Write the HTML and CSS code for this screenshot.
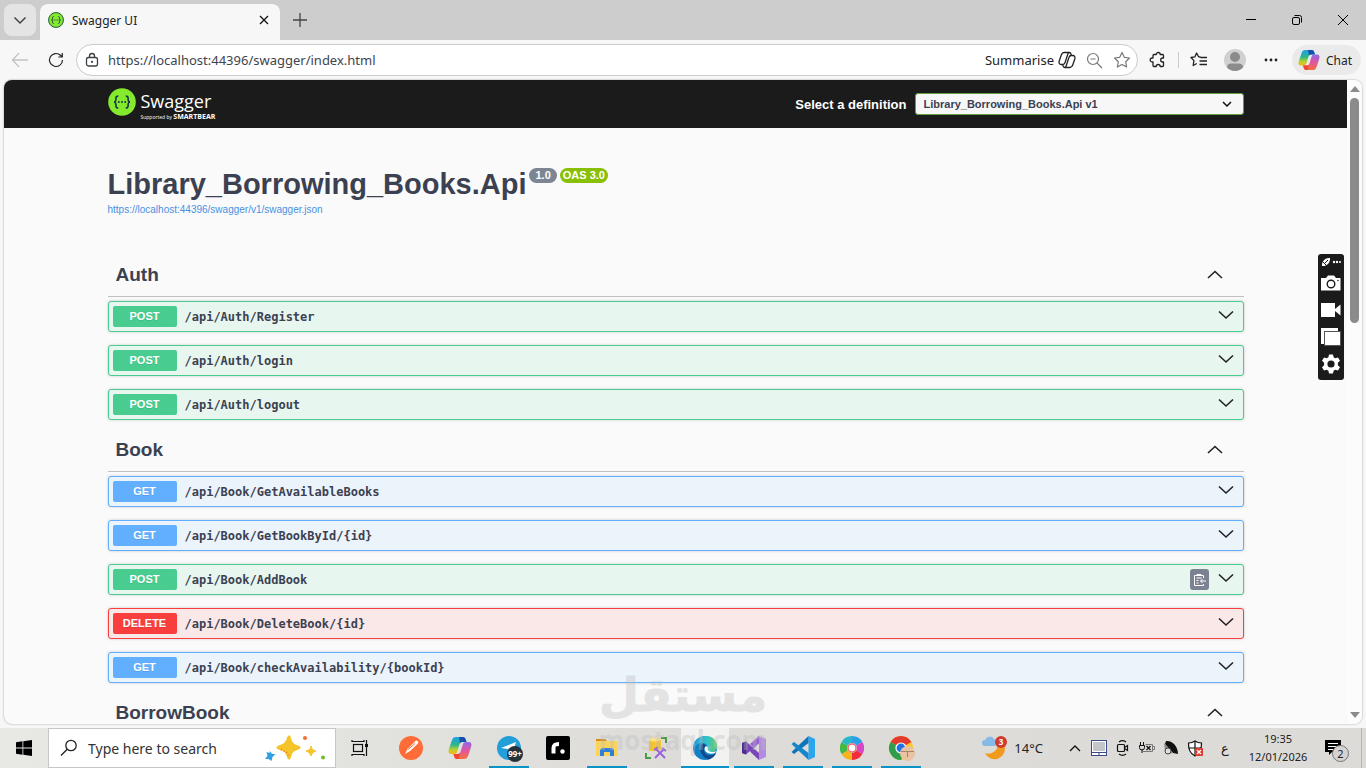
FILE: index.html
```html
<!DOCTYPE html>
<html lang="en">
<head>
  <meta charset="UTF-8">
  <meta name="viewport" content="width=device-width, initial-scale=1.0">
  <title>Swagger UI</title>
  <link rel="stylesheet" href="styles.css">
</head>
<body>
  <!-- Shared icons -->
  <svg class="defs" width="0" height="0" aria-hidden="true">
    <defs>
      <linearGradient id="cp-left" x1="0" y1="0" x2="0" y2="1">
        <stop offset="0" stop-color="#1fa0e8"/>
        <stop offset=".45" stop-color="#2bb58c"/>
        <stop offset=".75" stop-color="#b9d12e"/>
        <stop offset="1" stop-color="#f7b51a"/>
      </linearGradient>
      <linearGradient id="cp-right" x1="0" y1="0" x2="0" y2="1">
        <stop offset="0" stop-color="#8d6be8"/>
        <stop offset=".5" stop-color="#e0569f"/>
        <stop offset="1" stop-color="#f7713c"/>
      </linearGradient>
      <linearGradient id="edge-green" x1="0" y1="0" x2="1" y2="0">
        <stop offset="0" stop-color="#1d9fdb"/>
        <stop offset=".6" stop-color="#34c3c8"/>
        <stop offset="1" stop-color="#62cf5c"/>
      </linearGradient>
      <symbol id="chev-down" viewBox="0 0 16 16"><path d="M1 4.5l7 6.5 7-6.5" fill="none" stroke="#222" stroke-width="1.6"/></symbol>
      <symbol id="chev-up" viewBox="0 0 16 16"><path d="M1 11l7-6.5 7 6.5" fill="none" stroke="#222" stroke-width="1.6"/></symbol>
      <symbol id="swagger" viewBox="0 0 28 28">
        <circle cx="14" cy="14" r="13.8" fill="#85ea2d"/>
        <path d="M10.3 8c-2 0-2.4.8-2.4 2.300v1.500c0 1.300-.5 2-1.800 2.200 1.300.2 1.800.9 1.800 2.200v1.500c0 1.500.4 2.300 2.400 2.300M17.700 8c2 0 2.400.8 2.400 2.300v1.500c0 1.300.5 2 1.800 2.200-1.300.2-1.800.9-1.800 2.200v1.500c0 1.500-.4 2.300-2.400 2.300" fill="none" stroke="#173647" stroke-width="1.600"/>
        <circle cx="10.800" cy="14" r="1" fill="#173647"/><circle cx="14" cy="14" r="1" fill="#173647"/><circle cx="17.200" cy="14" r="1" fill="#173647"/>
      </symbol>
      <symbol id="copilot" viewBox="0 0 24 24">
        <path d="M8 1h7c1.500 0 2.200 1 2.600 2.300L18.500 6h-4c-1.800 0-2.600.8-3.100 2.500l-2.200 7C8.700 17.200 8 18 6 18H3.500C.8 18 0 16 .8 13.500l3-9C4.600 2 5.800 1 8 1z" fill="url(#cp-left)"/>
        <path d="M11 1h4c1.500 0 2.200 1 2.600 2.300L18.500 6h-4c-1.200 0-2 .4-2.500 1.300z" fill="#174fae"/>
        <path d="M16 23H9c-1.500 0-2.200-1-2.600-2.300L5.500 18h4c1.800 0 2.600-.8 3.100-2.500l2.200-7C15.300 6.800 16 6 18 6h2.500c2.700 0 3.500 2 2.700 4.500l-3 9c-.8 2.500-2 3.500-4.200 3.500z" fill="url(#cp-right)"/>
        <path d="M5.500 18h4c1.200 0 2-.4 2.500-1.300L10.500 23H9c-1.500 0-2.200-1-2.600-2.300z" fill="#f2452f"/>
      </symbol>
    </defs>
  </svg>

  <header class="titlebar">
    <button class="tab-menu" aria-label="Tab actions">
      <svg width="16" height="16" viewBox="0 0 16 16"><path d="M2.500 5.500L8 11l5.500-5.500" fill="none" stroke="#444" stroke-width="1.500"/></svg>
    </button>
    <div class="tab">
      <svg width="16" height="16"><use href="#swagger"/><circle cx="8" cy="8" r="7.400" fill="none" stroke="#2c5a55"/></svg>
      <span class="tab-title">Swagger UI</span>
      <button class="icon-btn tab-close" aria-label="Close tab">
        <svg width="10" height="10" viewBox="0 0 10 10"><path d="M1 1l8 8M9 1L1 9" stroke="#111" stroke-width="1.300"/></svg>
      </button>
    </div>
    <button class="icon-btn new-tab" aria-label="New tab">
      <svg width="16" height="16" viewBox="0 0 16 16"><path d="M8 1v14M1 8h14" stroke="#444" stroke-width="1.300"/></svg>
    </button>
    <div class="window-controls">
      <button class="icon-btn" aria-label="Minimise"><svg width="10" height="10"><path d="M0 4.500h10" stroke="#000"/></svg></button>
      <button class="icon-btn" aria-label="Restore"><svg width="12" height="12" fill="none" stroke="#000"><rect x="1.500" y="3.500" width="7" height="7" rx="1.500"/><path d="M3.500 1.500h5a2 2 0 012 2v5"/></svg></button>
      <button class="icon-btn" aria-label="Close"><svg width="12" height="12"><path d="M1 1l10 10M11 1L1 11" stroke="#000"/></svg></button>
    </div>
  </header>

  <nav class="toolbar">
    <button class="icon-btn tool" aria-label="Back">
      <svg width="18" height="16" viewBox="0 0 18 16" fill="none" stroke="#c3c3c3" stroke-width="1.300"><path d="M8 1L1.500 8 8 15M1.500 8H17"/></svg>
    </button>
    <button class="icon-btn tool" aria-label="Refresh">
      <svg width="16" height="16" viewBox="0 0 16 16" fill="none" stroke="#222" stroke-width="1.200"><path d="M14.500 8a6.500 6.500 0 11-2-4.700L14.300 5M14.300 1v4h-4"/></svg>
    </button>
    <div class="address">
      <svg width="14" height="16" viewBox="0 0 14 16" fill="none" stroke="#3b3f46" stroke-width="1.300"><rect x="1.500" y="5.500" width="11" height="8.500" rx="2"/><path d="M4.500 5.500V4a2.500 2.500 0 015 0v1.500"/><circle cx="7" cy="9.800" r=".5" fill="#3b3f46"/></svg>
      <input type="text" class="url" aria-label="Address" value="https://localhost:44396/swagger/index.html">
      <button class="summarise">Summarise
        <svg width="18" height="18" viewBox="0 0 18 18" fill="none" stroke="#222" stroke-width="1.300" stroke-linejoin="round"><path d="M6 1.500h5.500c1.200 0 1.500 1 1.800 2.500M6 1.500C4.500 1.500 3.800 2.500 3.300 4L1.200 10c-.6 2 .2 3.500 2 3.500h1.500c1.400 0 2-.8 2.400-2L9.500 4c.4-1.500 1-2.500 2-2.500M12 16.500H6.500c-1.200 0-1.500-1-1.800-3M12 16.500c1.500 0 2.200-1 2.700-2.500l2.100-6c.6-2-.2-3.500-2-3.500h-1.500c-1.400 0-2 .8-2.400 2L8.500 14c-.4 1.500-1 2.500-2 2.500"/></svg>
      </button>
      <button class="icon-btn addr-btn" aria-label="Zoom out">
        <svg width="17" height="17" viewBox="0 0 17 17" fill="none" stroke="#777" stroke-width="1.200"><circle cx="7" cy="7" r="5.500"/><path d="M11 11l5 5M4.500 7h5"/></svg>
      </button>
      <button class="icon-btn addr-btn" aria-label="Add to favourites">
        <svg width="18" height="18" viewBox="0 0 18 18" fill="none" stroke="#777" stroke-width="1.200" stroke-linejoin="round"><path d="M9 1.500l2.300 4.800 5.200.7-3.800 3.700.9 5.300L9 13.500 4.400 16l.9-5.300L1.500 7l5.200-.7z"/></svg>
      </button>
    </div>
    <button class="icon-btn tool" aria-label="Extensions">
      <svg width="18" height="18" viewBox="0 0 18 18" fill="none" stroke="#222" stroke-width="1.300" stroke-linejoin="round"><path d="M5 3.500h2.200a2 2 0 014 0h2.300a1 1 0 011 1V7h-.8a2 2 0 000 4h.8v3.500a1 1 0 01-1 1h-2.300a2 2 0 00-4 0H5a1 1 0 01-1-1V11H3.200a2 2 0 010-4H4V4.500a1 1 0 011-1z"/></svg>
    </button>
    <span class="divider"></span>
    <button class="icon-btn tool" aria-label="Favourites">
      <svg width="18" height="18" viewBox="0 0 18 18" fill="none" stroke="#222" stroke-width="1.300" stroke-linejoin="round"><path d="M10.500 6L8.600 5.800 6.600 2 4.800 5.900 1 6.500l2.900 3.100-.7 4.900 3.600-2M10.500 6.500H17M9.500 10H17M9.500 13.500H17"/></svg>
    </button>
    <button class="icon-btn tool" aria-label="Profile">
      <svg width="22" height="22" viewBox="0 0 22 22"><circle cx="11" cy="11" r="11" fill="#d0d0d0"/><circle cx="11" cy="8" r="5" fill="#8b8b8b"/><path d="M3 18.500c0-3 2-4 4-4h8c2 0 4 1 4 4a11 11 0 01-16 0z" fill="#8b8b8b"/></svg>
    </button>
    <button class="icon-btn tool" aria-label="Settings and more">
      <svg width="14" height="4" fill="#222"><circle cx="2" cy="2" r="1.400"/><circle cx="7" cy="2" r="1.400"/><circle cx="12" cy="2" r="1.400"/></svg>
    </button>
    <button class="chat"><svg width="22" height="22"><use href="#copilot"/></svg>Chat</button>
  </nav>

  <div class="viewport">
    <div class="page">
      <div class="topbar">
        <div class="wrapper topbar-inner">
          <a class="logo" href="#" aria-label="Swagger">
            <svg width="28" height="28"><use href="#swagger"/></svg>
            <span class="logo-text">
              <span class="logo-name">Swagger</span>
              <span class="logo-sub">Supported by <b>SMARTBEAR</b></span>
            </span>
          </a>
          <label class="definition" for="definition">Select a definition</label>
          <select id="definition">
            <option>Library_Borrowing_Books.Api v1</option>
          </select>
        </div>
      </div>

      <main class="wrapper">
        <section class="info">
          <h1>Library_Borrowing_Books.Api <span class="badge">1.0</span><span class="badge oas">OAS 3.0</span></h1>
          <a href="#">https://localhost:44396/swagger/v1/swagger.json</a>
        </section>

        <section>
          <h2 class="tag"><span>Auth</span><svg width="16" height="16"><use href="#chev-up"/></svg></h2>
          <div class="ops">
            <button class="op post"><span class="method">POST</span><span class="path">/api/Auth/Register</span><svg class="arrow" width="16" height="16"><use href="#chev-down"/></svg></button>
            <button class="op post"><span class="method">POST</span><span class="path">/api/Auth/login</span><svg class="arrow" width="16" height="16"><use href="#chev-down"/></svg></button>
            <button class="op post"><span class="method">POST</span><span class="path">/api/Auth/logout</span><svg class="arrow" width="16" height="16"><use href="#chev-down"/></svg></button>
          </div>
        </section>

        <section>
          <h2 class="tag"><span>Book</span><svg width="16" height="16"><use href="#chev-up"/></svg></h2>
          <div class="ops">
            <button class="op get"><span class="method">GET</span><span class="path">/api/Book/GetAvailableBooks</span><svg class="arrow" width="16" height="16"><use href="#chev-down"/></svg></button>
            <button class="op get"><span class="method">GET</span><span class="path">/api/Book/GetBookById/{id}</span><svg class="arrow" width="16" height="16"><use href="#chev-down"/></svg></button>
            <button class="op post"><span class="method">POST</span><span class="path">/api/Book/AddBook</span>
              <span class="copy"><svg width="13" height="14" viewBox="0 0 13 14" fill="none" stroke="#fff"><path d="M10.500 5V2.500h-9v10h9V11M4 2.500v-1h4v1M3.500 5h5M3.500 7.500h2M3.500 10h2M13 8H7.500M9.500 6l-2 2 2 2"/></svg></span>
              <svg class="arrow" width="16" height="16"><use href="#chev-down"/></svg></button>
            <button class="op delete"><span class="method">DELETE</span><span class="path">/api/Book/DeleteBook/{id}</span><svg class="arrow" width="16" height="16"><use href="#chev-down"/></svg></button>
            <button class="op get"><span class="method">GET</span><span class="path">/api/Book/checkAvailability/{bookId}</span><svg class="arrow" width="16" height="16"><use href="#chev-down"/></svg></button>
          </div>
        </section>

        <section>
          <h2 class="tag"><span>BorrowBook</span><svg width="16" height="16"><use href="#chev-up"/></svg></h2>
        </section>
      </main>
    </div>

    <div class="scrollbar">
      <svg width="10" height="6"><path d="M0 6l5-6 5 6z" fill="#8b8b8b"/></svg>
      <div class="track"><div class="thumb"></div></div>
      <svg width="10" height="6"><path d="M0 0l5 6 5-6z" fill="#8b8b8b"/></svg>
    </div>

    <!-- Screen capture widget -->
    <aside class="capture">
      <svg width="20" height="8" viewBox="0 1 20 8" fill="#fff"><path d="M1 9c0-2 0-3 1-4.500C3.500 2 6 .8 9 1 9.200 4 8 6.500 5.500 8 4 9 3 9 1 9z"/><path d="M3 7l4-4M2 5l3 3" stroke="#1b1b1b"/><circle cx="13" cy="5" r="1.200"/><circle cx="16" cy="5" r="1.200"/><circle cx="19" cy="5" r="1"/></svg>
      <svg width="20" height="20" viewBox="0 -2 20 20"><path d="M0 3h5l2-2.500h6L15 3h4.500v12.500H0z" fill="#fff"/><circle cx="10" cy="9" r="3.800" fill="none" stroke="#1b1b1b" stroke-width="1.400"/><circle cx="17" cy="5.500" r=".7"/></svg>
      <svg width="20" height="20" viewBox="0 -3 20 20" fill="#fff"><path d="M0 0h14v14H0zM14 6l5.500-4.500v11L14 8z"/></svg>
      <svg width="20" height="20" viewBox="0 -1 20 20"><path d="M0 0h17v3H3v13H0z" fill="#fff"/><path d="M3.500 3.500h16v14h-16z" fill="#fff" stroke="#555"/></svg>
      <svg width="20" height="20" viewBox="0 0 20 20"><path d="M8 .5h4l.6 2.800 1.700 1 2.700-.9 2 3.400-2.100 1.900v2.600l2.100 1.900-2 3.400-2.700-.9-1.700 1-.6 2.800H8l-.6-2.800-1.700-1-2.700.9-2-3.400 2.100-1.900V8.700L1 6.800l2-3.400 2.700.9 1.700-1z" fill="#fff"/><circle cx="10" cy="10" r="3.600" fill="#1b1b1b"/></svg>
    </aside>
  </div>

  <footer class="taskbar">
    <button class="start" aria-label="Start">
      <svg width="16" height="16" viewBox="0 0 16 16"><path d="M0 2.200l6.500-.9v6.200H0zM7.300 1.200L16 0v7.500H7.300zM0 8.400h6.500v6.300L0 13.800zM7.300 8.400H16V16l-8.700-1.200z"/></svg>
    </button>
    <div class="search">
      <svg width="18" height="18" viewBox="0 0 18 18" fill="none" stroke="#222" stroke-width="1.300"><circle cx="11" cy="6.500" r="5.200"/><path d="M7.200 10.300L1 16.500"/></svg>
      <input type="text" placeholder="Type here to search" aria-label="Type here to search">
      <svg width="62" height="26" viewBox="0 0 62 26">
        <path d="M25 2c2 7 3 8 10 10.500-7 2.500-8 3.500-10 10.500-2-7-4-8-11-10.500C21 10 23 9 25 2z" fill="#f5c428" stroke="#f5c428" stroke-width="3" stroke-linejoin="round"/>
        <path d="M47 11c1 4 2 4 5 5-3 1-4 2-5 5-1-3-2-4-5-5 3-1 4-1 5-5z" fill="#f5c428" stroke="#f5c428"/>
        <path d="M6 16l2 3 3.500 0-3 3-1 4-3-2-3.500 0 2.500-3-1-4 3 1z" fill="#2f9fe5"/>
        <path d="M17 14.500l6 3 2 5" fill="none" stroke="#e9783c" stroke-width="1.500" stroke-dasharray="1 2"/>
        <circle cx="41" cy="3" r="2" fill="#f0703c"/><circle cx="59" cy="22.500" r="2" fill="#6bbf23"/>
      </svg>
    </div>
    <div class="apps">
      <button class="app view" aria-label="Task view"><svg width="18" height="16" viewBox="0 0 18 16" fill="none" stroke="#111" stroke-width="1.200"><rect x="2.500" y="4.500" width="9" height="7"/><path d="M1 0v1.500h12V0M1 16v-1.500h12V16M15.500 0v16"/><path d="M14 5.500h3" stroke-width="3"/></svg></button>
      <button class="app" aria-label="Postman"><svg width="24" height="24"><circle cx="12" cy="12" r="12" fill="#ff6c37"/><path d="M6 18l2.500-5L16 5.500a1.500 1.500 0 013 2L11 15z" fill="#fff"/><path d="M9 13.500l7-6" stroke="#ff6c37"/></svg></button>
      <button class="app" aria-label="Copilot"><svg width="24" height="24"><use href="#copilot"/></svg></button>
      <button class="app open" aria-label="Telegram"><svg width="24" height="24"><circle cx="12" cy="12" r="12" fill="#229ed9"/><path d="M4 12L19 6l-3 10-5-3z" fill="#fff"/></svg><span class="count">99+</span></button>
      <button class="app" aria-label="Roblox"><svg width="24" height="24"><rect width="24" height="24" rx="2"/><path d="M7.500 17.500V12c0-3 1.500-4 5.500-4" fill="none" stroke="#fff" stroke-width="4"/><circle cx="16.500" cy="15.500" r="2.200" fill="#fff"/></svg></button>
      <button class="app open" aria-label="File Explorer"><svg width="22" height="20" viewBox="0 0 22 20"><path d="M0 1h9l2 2h11v15H0z" fill="#fbd55b"/><path d="M0 1h9l2 2H0z" fill="#d98b12"/><path d="M4 18v-6l2-2h10l2 2v6h-4v-4H8v4z" fill="#2f7fd6"/></svg></button>
      <button class="app" aria-label="SQL tools"><svg width="24" height="24" viewBox="0 0 24 24"><path d="M5 3h12v10l-4 2H5z" fill="#f7c52a"/><ellipse cx="11" cy="3.500" rx="6" ry="2" fill="#fbe08a"/><path d="M17 2h5v5M2 17v5h5" fill="none" stroke="#4a9b46" stroke-width="2"/><path d="M12 13l9 9M20 13l-9 9M10 14l4-3M18 12l4 3" stroke="#9a63d8" stroke-width="2"/></svg></button>
      <button class="app open active" aria-label="Edge"><svg width="24" height="24"><circle cx="12" cy="12" r="12" fill="#1280c8"/><path d="M1 8C4 1 10 0 13 0c7 0 11 5 11 10 0 4-3 6-6 6-4 0-3-2-3-4 0-3-3-5-6-5-4 0-7 3-8 6z" fill="url(#edge-green)"/><path d="M9 8c-3 4-2 12 6 15.500 4-.8 6.500-3 8-6-7 4-12 1-12-4 0-2 1-3 2-3.500C12 8 10.500 7.500 9 8z" fill="#114a8b"/><path d="M12 11c-2 5 4 8 10 6l1-2c-3 2-9 1-8-3 0-1-1-3-3-1z" fill="#fff"/></svg></button>
      <button class="app open" aria-label="Visual Studio"><svg width="24" height="24"><path d="M17 0l7 3v18l-7 3z" fill="#b48be4"/><path d="M17 0v7L4 18.500 0 17V7l4-1.500L17 17v7L8 15.500z" fill="#7a45b8"/><path d="M0 7l4-1.500v13L0 17z" fill="#4b2f86"/><path d="M17 0L8 8l4 4 5-5z" fill="#9560d3"/></svg></button>
      <button class="app open" aria-label="VS Code"><svg width="24" height="24"><path d="M17.500 0L24 3v18l-6.500 3z" fill="#2ba5ec"/><path d="M17.500 0v7L3 18 .5 16 17.500 0z" fill="#0d74ba"/><path d="M17.500 24v-7L3 6 .5 8z" fill="#1486cc"/></svg></button>
      <button class="app open" aria-label="Screen recorder"><svg width="24" height="24" fill="none" stroke-width="7"><path d="M12 3.500a8.500 8.500 0 017.400 4.200" stroke="#2b9fe8"/><path d="M19.400 7.700a8.500 8.500 0 010 8.600" stroke="#d546c8"/><path d="M19.400 16.300A8.500 8.500 0 0112 20.500" stroke="#ee2f3a"/><path d="M12 20.500a8.500 8.500 0 01-7.400-4.200" stroke="#f7b21c"/><path d="M4.600 16.300a8.500 8.500 0 010-8.600" stroke="#43b943"/><path d="M4.600 7.700A8.500 8.500 0 0112 3.500" stroke="#27b8c9"/><circle cx="12" cy="12" r="4" fill="#fff" stroke="#f2696c" stroke-width="1.500"/></svg></button>
      <button class="app open" aria-label="Chrome"><svg width="28" height="26" viewBox="-2 -1 28 26"><circle cx="12" cy="12" r="12" fill="#fcc934"/><path d="M12 12L1.600 6a12 12 0 0120.800 0z" fill="#e33b2e"/><path d="M12 12L1.600 6A12 12 0 0012 24l5-9z" fill="#2e9e4d"/><circle cx="12" cy="12" r="5.600" fill="#fff"/><circle cx="12" cy="12" r="4.400" fill="#1a73e8"/><circle cx="18.500" cy="17.500" r="7.500" fill="#e9c3a2"/><path d="M12 15.500h13M18.500 16v5" stroke="#a58468"/></svg></button>
    </div>

    <div class="tray">
      <button class="weather">
        <svg width="26" height="24" viewBox="0 0 26 24"><path d="M22 9a10 10 0 01-19 8c5 2 12-1 13-8z" fill="#f29a1d"/><path d="M3 10a3 3 0 010-6 5 5 0 019-1 4 4 0 011 7z" fill="#84b9e8"/><circle cx="19" cy="6" r="6" fill="#d13a2e"/><text x="19" y="9" class="weather-count">3</text></svg>
        14°C
      </button>
      <button class="tray-btn" aria-label="Show hidden icons"><svg width="12" height="8"><path d="M1 7l5-5 5 5" fill="none" stroke="#111" stroke-width="1.300"/></svg></button>
      <button class="tray-btn" aria-label="Touchpad"><svg width="16" height="16"><rect x=".5" y=".5" width="15" height="15" fill="#fff" stroke="#3d4a86"/><rect x="2" y="2" width="12" height="9" fill="#c3c5c8"/><path d="M1 12.500h14M8 12.500v3" stroke="#3d4a86"/></svg></button>
      <button class="tray-btn" aria-label="Meet now"><svg width="14" height="16" fill="none" stroke="#111" stroke-width="1.200"><rect x="1.500" y="4.500" width="7" height="7" rx="1"/><path d="M8.500 7.500l3-2v5l-3-2M3 2c2-1.500 5-1.500 7 0M3 14c2 1.500 5 1.500 7 0"/></svg></button>
      <button class="tray-btn" aria-label="Battery"><svg width="16" height="14" fill="none" stroke="#111"><path d="M1.500 1v3M4.500 1v3M.5 4.500h5v2a2 2 0 01-5 0zM3 8.500V12"/><path d="M6.500 3.500h7v7H4M13.500 5.500h2v3h-2" stroke="#777"/><path d="M7.500 5l4 4M11.500 5l-4 4" stroke-width="1.300"/></svg></button>
      <button class="tray-btn" aria-label="Volume"><svg width="16" height="16"><path d="M3 1c6-1 12 5 12 13l-5-1L2 4z" fill="#111"/><path d="M1 3l9 10-5 1-3-3z" fill="#8a8a8a"/><circle cx="5" cy="11" r="3" fill="#ddd" stroke="#444"/></svg></button>
      <button class="tray-btn" aria-label="Security"><svg width="17" height="17"><path d="M8 1c2 1.500 4 2 6.500 2 0 6-1 10-6.500 13C2.500 13 1.500 9 1.500 3 4 3 6 2.500 8 1z" fill="#fff" stroke="#111" stroke-width="1.200"/><path d="M8 1v15M1.500 8h13" stroke="#111" stroke-width="1.200"/><rect x="8" y="8" width="8" height="8" rx="1" fill="#e0392b"/><path d="M10 10l4 4M14 10l-4 4" stroke="#fff" stroke-width="1.300"/></svg></button>
      <button class="lang" lang="ar">ع</button>
      <time class="clock"><span>19:35</span><span>12/01/2026</span></time>
      <button class="notify" aria-label="Notifications">
        <svg width="16" height="16"><path d="M0 0h16v12H7l-3 3v-3H0z"/><path d="M3 3.500h10M3 6.500h10M3 9.500h5" stroke="#fff"/></svg>
        <span class="notify-count">2</span>
      </button>
    </div>
  </footer>

  <div class="watermark" aria-hidden="true">
    <span class="mark-ar" lang="ar">مستقل</span>
    <span class="mark-en">mostaql.com</span>
  </div>
</body>
</html>
```
FILE: styles.css
```css
* {
  margin: 0;
  padding: 0;
  box-sizing: border-box;
}

body {
  font-family: 'Segoe UI', 'Noto Sans', sans-serif;
  font-size: 13px;
  color: #222;
  background-color: #f7f7f7;
  height: 100vh;
  display: flex;
  flex-direction: column;
  overflow: hidden;
}

button {
  font: inherit;
  color: inherit;
  background: none;
  border: none;
}

svg {
  flex: none;
  display: block;
}

.defs {
  position: absolute;
}

.icon-btn {
  display: flex;
  align-items: center;
  justify-content: center;
}

/* Browser tabs */
.titlebar {
  display: flex;
  flex: none;
  height: 40px;
  padding: 4px 0 0 4px;
  background-color: #cdcdcd;
}

.tab-menu {
  display: flex;
  align-items: center;
  justify-content: center;
  width: 32px;
  height: 32px;
  border-radius: 8px;
  background-color: #e4e4e4;
}

.tab {
  display: flex;
  align-items: center;
  gap: 8px;
  width: 240px;
  height: 36px;
  margin-left: 4px;
  padding: 0 8px 4px;
  border-radius: 8px 8px 0 0;
  background-color: #f7f7f7;
}

.tab-title {
  flex: 1;
  font-size: 12px;
}

.tab-close {
  width: 16px;
  height: 16px;
}

.new-tab {
  width: 40px;
  height: 32px;
}

.window-controls {
  display: flex;
  margin-left: auto;
}

.window-controls .icon-btn {
  width: 46px;
  height: 32px;
}

/* Address row */
.toolbar {
  display: flex;
  flex: none;
  align-items: center;
  height: 40px;
  padding: 0 5px 0 2px;
}

.tool {
  width: 36px;
  height: 32px;
}

.divider {
  width: 1px;
  height: 16px;
  margin: 0 2px;
  background-color: #ccc;
}

.address {
  display: flex;
  flex: 1;
  align-items: center;
  height: 32px;
  margin: 0 2px;
  padding: 0 1px 0 8px;
  border: 1px solid #ccc;
  border-radius: 16px;
  background-color: #fff;
}

.url {
  flex: 1;
  margin-left: 9px;
  border: none;
  background: none;
  font: 13px 'Segoe UI', 'Noto Sans', sans-serif;
  color: #40444d;
}

.summarise {
  display: flex;
  align-items: center;
  gap: 4px;
  font-size: 13px;
  margin-right: 4px;
}

.addr-btn {
  width: 28px;
  height: 28px;
}

.chat {
  display: flex;
  align-items: center;
  gap: 6px;
  width: 69px;
  height: 30px;
  margin-left: 3px;
  padding: 0 6px;
  border-radius: 15px;
  background-color: #eaeaea;
  font-size: 12px;
}

/* Page area */
.viewport {
  position: relative;
  display: flex;
  flex: 1;
  min-height: 0;
  margin: 0 4px 4px;
  border-radius: 8px;
  background-color: #fafafa;
  box-shadow: 0 0 2px rgba(0, 0, 0, 0.4);
  overflow: hidden;
}

.page {
  flex: 1;
  overflow: hidden;
  font-family: 'Liberation Sans', Arial, sans-serif;
  color: #3b4151;
}

.wrapper {
  width: 100%;
  max-width: 1168px;
  margin: 0 auto;
  padding: 0 16px;
}

.topbar {
  background-color: #1b1b1b;
}

.topbar-inner {
  display: flex;
  align-items: center;
  height: 48px;
}

.logo {
  display: flex;
  gap: 5px;
  height: 32px;
  color: #fff;
  text-decoration: none;
}

.logo-text {
  display: flex;
  flex-direction: column;
  font-family: 'Open Sans', sans-serif;
}

.logo-name {
  font-size: 18px;
  line-height: 26px;
}

.logo-sub {
  font-size: 5px;
  line-height: 6px;
}

.logo-sub b {
  font-size: 7px;
}

.definition {
  margin-left: auto;
  padding-right: 8px;
  color: #fff;
  font-size: 13px;
  font-weight: bold;
}

#definition {
  appearance: none;
  width: 329px;
  height: 22px;
  padding: 0 8px;
  border: 1px solid #62a03f;
  border-radius: 3px;
  color: #3b4151;
  font: bold 11px 'Liberation Sans', Arial, sans-serif;
  background: #f7f7f7 url("data:image/svg+xml,%3Csvg xmlns='http://www.w3.org/2000/svg' width='10' height='6'%3E%3Cpath d='M1 1l4 4 4-4' fill='none' stroke='%23111' stroke-width='1.500'/%3E%3C/svg%3E") no-repeat right 11px center;
}

.info {
  height: 117px;
  padding-top: 39px;
}

h1 {
  display: flex;
  gap: 3px;
  font-size: 29px;
  line-height: 34px;
}

.badge {
  height: 15px;
  padding: 0 6px;
  margin-top: 1px;
  border-radius: 8px;
  background-color: #7d8492;
  color: #fff;
  font-size: 11px;
  line-height: 15px;
}

.badge.oas {
  padding: 0 3px;
  background-color: #89bf04;
}

.info a {
  display: block;
  color: #4990e2;
  font-size: 10px;
  line-height: 18px;
  text-decoration: none;
}

.tag {
  display: flex;
  align-items: center;
  justify-content: space-between;
  height: 52px;
  padding: 9px 21px 0 8px;
  border-bottom: 1px solid #bfc0c4;
  font-size: 19px;
}

.ops {
  display: flex;
  flex-direction: column;
  gap: 13px;
  padding-top: 4px;
}

.op {
  display: flex;
  align-items: center;
  height: 31px;
  padding: 0 9px 0 4px;
  border: 1px solid;
  border-radius: 3px;
  box-shadow: 0 0 3px rgba(0, 0, 0, 0.2);
  text-align: left;
}

.method {
  width: 64px;
  border-radius: 2px;
  color: #fff;
  font-size: 11px;
  font-weight: bold;
  line-height: 21px;
  text-align: center;
  text-shadow: 0 1px 0 rgba(0, 0, 0, 0.1);
}

.path {
  flex: 1;
  padding-left: 8px;
  font: bold 12px Consolas, 'DejaVu Sans Mono', monospace;
  color: #3b4151;
}

.arrow {
  margin-bottom: 3px;
}

.copy {
  display: flex;
  align-items: center;
  justify-content: center;
  width: 19px;
  height: 21px;
  margin-right: 9px;
  border-radius: 3px;
  background-color: #7d8293;
}

.post {
  border-color: #49cc90;
  background-color: #e8f6f0;
}

.post .method {
  background-color: #49cc90;
}

.get {
  border-color: #61affe;
  background-color: #ebf3fb;
}

.get .method {
  background-color: #61affe;
}

.delete {
  border-color: #f93e3e;
  background-color: #fae7e7;
}

.delete .method {
  background-color: #f93e3e;
}

.scrollbar {
  display: flex;
  flex-direction: column;
  align-items: center;
  width: 15px;
  padding: 6px 0;
  background-color: #fcfcfc;
}

.track {
  flex: 1;
  padding: 6px 0;
}

.thumb {
  width: 9px;
  height: 37%;
  border-radius: 5px;
  background-color: #8b8b8b;
}

.capture {
  position: absolute;
  top: 174px;
  right: 18px;
  display: flex;
  flex-direction: column;
  align-items: center;
  gap: 7px;
  width: 26px;
  height: 126px;
  padding-top: 4px;
  border-radius: 3px;
  background-color: #1b1b1b;
}

/* Windows taskbar */
.taskbar {
  display: flex;
  flex: none;
  height: 40px;
  background: linear-gradient(90deg, #e8e9e5, #dddcd9 50%, #dcdbd8);
}

.start {
  display: flex;
  align-items: center;
  justify-content: center;
  width: 48px;
}

.search {
  display: flex;
  align-items: center;
  width: 288px;
  padding: 0 9px 0 11px;
  border: 1px solid #c6c6c6;
  background-color: #fff;
}

.search input {
  flex: 1;
  min-width: 0;
  margin-left: 10px;
  border: none;
  font: 14px 'Segoe UI', 'Noto Sans', sans-serif;
}

.search input::placeholder {
  color: #333;
}

.apps {
  display: flex;
  gap: 1px;
}

.app {
  position: relative;
  display: flex;
  align-items: center;
  justify-content: center;
  width: 48px;
}

.app.view {
  margin-right: 2px;
}

.app.open::after {
  content: '';
  position: absolute;
  bottom: 0;
  left: 4px;
  right: 4px;
  height: 2px;
  background-color: #0a93c4;
}

.app.active {
  background-color: #f2f2f1;
}

.app.active::after {
  left: 0;
  right: 0;
}

.count {
  position: absolute;
  left: 22px;
  top: 18px;
  width: 16px;
  height: 16px;
  border-radius: 8px;
  background-color: #263238;
  color: #fff;
  font-size: 8px;
  font-weight: bold;
  line-height: 16px;
  text-align: center;
}

.tray {
  display: flex;
  align-items: center;
  margin-left: auto;
  margin-right: 4px;
  padding-right: 12px;
  border-right: 1px solid #b5b5b5;
}

.weather {
  display: flex;
  align-items: center;
  gap: 6px;
  margin-right: 20px;
  font-size: 13px;
}

.weather-count {
  fill: #fff;
  font-size: 8px;
  font-weight: bold;
  text-anchor: middle;
}

.tray-btn {
  display: flex;
  align-items: center;
  justify-content: center;
  width: 24px;
  height: 40px;
}

.lang {
  width: 36px;
  font: 13px 'DejaVu Sans', sans-serif;
}

.clock {
  display: flex;
  flex-direction: column;
  align-items: center;
  width: 70px;
  font-size: 11px;
  line-height: 18px;
}

.notify {
  position: relative;
  width: 36px;
  height: 24px;
  padding-left: 12px;
}

.notify-count {
  position: absolute;
  left: 19px;
  top: 9px;
  width: 17px;
  height: 17px;
  border: 1px solid #777;
  border-radius: 9px;
  background-color: #d3d3d3;
  font-size: 11px;
  line-height: 15px;
  text-align: center;
}

/* Watermark over the whole screen */
.watermark {
  position: absolute;
  left: 50%;
  bottom: 10px;
  display: flex;
  flex-direction: column;
  align-items: center;
  transform: translateX(-50%);
  color: #bbb;
  opacity: 0.35;
  pointer-events: none;
}

.mark-ar {
  font: bold 46px/54px 'DejaVu Sans', sans-serif;
  -webkit-text-stroke: 1px #bbb;
}

.mark-en {
  font: bold 26px/36px 'Open Sans', sans-serif;
}
```
